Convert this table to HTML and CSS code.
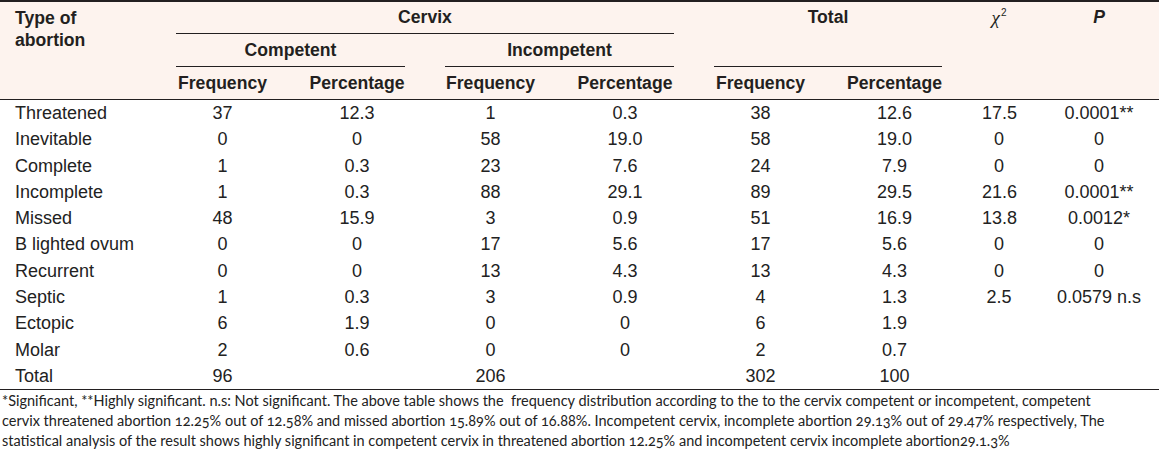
FILE: index.html
```html
<!DOCTYPE html>
<html lang="en">
<head>
<meta charset="utf-8">
<title>Type of abortion by cervix</title>
<link rel="stylesheet" href="styles.css">
</head>
<body>
<div class="tbl">
  <div class="thead grid">
    <div class="h-type">Type of<br>abortion</div>
    <div class="h cervix">Cervix</div>
    <div class="h total">Total</div>
    <div class="h chi"><span><i>χ</i><sup>2</sup></span></div>
    <div class="h p"><i>P</i></div>
    <div class="h comp">Competent</div>
    <div class="h incomp">Incompetent</div>
    <div class="h r3 c2">Frequency</div>
    <div class="h r3 c3">Percentage</div>
    <div class="h r3 c4">Frequency</div>
    <div class="h r3 c5">Percentage</div>
    <div class="h r3 c6">Frequency</div>
    <div class="h r3 c7">Percentage</div>
  </div>
  <div class="tbody grid">
    <div class="name">Threatened</div><div>37</div><div>12.3</div><div>1</div><div>0.3</div><div>38</div><div>12.6</div><div>17.5</div><div>0.0001**</div>
    <div class="name">Inevitable</div><div>0</div><div>0</div><div>58</div><div>19.0</div><div>58</div><div>19.0</div><div>0</div><div>0</div>
    <div class="name">Complete</div><div>1</div><div>0.3</div><div>23</div><div>7.6</div><div>24</div><div>7.9</div><div>0</div><div>0</div>
    <div class="name">Incomplete</div><div>1</div><div>0.3</div><div>88</div><div>29.1</div><div>89</div><div>29.5</div><div>21.6</div><div>0.0001**</div>
    <div class="name">Missed</div><div>48</div><div>15.9</div><div>3</div><div>0.9</div><div>51</div><div>16.9</div><div>13.8</div><div>0.0012*</div>
    <div class="name">B lighted ovum</div><div>0</div><div>0</div><div>17</div><div>5.6</div><div>17</div><div>5.6</div><div>0</div><div>0</div>
    <div class="name">Recurrent</div><div>0</div><div>0</div><div>13</div><div>4.3</div><div>13</div><div>4.3</div><div>0</div><div>0</div>
    <div class="name">Septic</div><div>1</div><div>0.3</div><div>3</div><div>0.9</div><div>4</div><div>1.3</div><div>2.5</div><div>0.0579 n.s</div>
    <div class="name">Ectopic</div><div>6</div><div>1.9</div><div>0</div><div>0</div><div>6</div><div>1.9</div><div></div><div></div>
    <div class="name">Molar</div><div>2</div><div>0.6</div><div>0</div><div>0</div><div>2</div><div>0.7</div><div></div><div></div>
    <div class="name">Total</div><div>96</div><div></div><div>206</div><div></div><div>302</div><div>100</div><div></div><div></div>
  </div>
</div>
<p class="note">*Significant, **Highly significant. n.s: Not significant. The above table shows the&nbsp; frequency distribution according to the to the cervix competent or incompetent, competent cervix threatened abortion 12.25% out of 12.58% and missed abortion 15.89% out of 16.88%. Incompetent cervix, incomplete abortion 29.13% out of 29.47% respectively, The statistical analysis of the result shows highly significant in competent cervix in threatened abortion 12.25% and incompetent cervix incomplete abortion29.1.3%</p>
</body>
</html>
```
FILE: styles.css
```css
html, body {
  margin: 0;
  padding: 0;
  background: #ffffff;
}

body {
  width: 1159px;
  height: 453px;
  overflow: hidden;
  font-family: "Liberation Sans", Arial, sans-serif;
  color: #231f20;
}

.tbl {
  width: 1159px;
  border-top: 2px solid #231f20;
  border-bottom: 1px solid #231f20;
}

.grid {
  display: grid;
  grid-template-columns: 136px 93px 96px 91px 98px 93px 95px 34px 86px;
  column-gap: 40px;
}

.thead {
  background: #fdf3ee;
  border-bottom: 1px solid #231f20;
  grid-template-rows: 32px 33px 32px;
  font-weight: bold;
  font-size: 17.6px;
}

.h {
  display: flex;
  align-items: center;
  justify-content: center;
  white-space: nowrap;
  box-sizing: border-box;
}

.h-type {
  grid-column: 1;
  grid-row: 1 / 4;
  padding: 5px 0 0 15px;
  line-height: 22px;
}

.cervix {
  grid-column: 2 / 6;
  grid-row: 1;
  border-bottom: 1px solid #231f20;
}

.total {
  grid-column: 6 / 8;
  grid-row: 1 / 3;
  align-items: flex-start;
  line-height: 31px;
  border-bottom: 1px solid #231f20;
}

.chi, .p {
  grid-row: 1;
  align-items: flex-start;
  line-height: 31px;
}

.chi {
  grid-column: 8;
  font-weight: normal;
  font-family: "Liberation Serif", "Times New Roman", serif;
  font-size: 19px;
}

.chi sup {
  font-family: "Liberation Sans", Arial, sans-serif;
  font-size: 10px;
  line-height: 0;
  vertical-align: 8px;
  margin-left: 1px;
}

.p {
  grid-column: 9;
}

.comp {
  grid-column: 2 / 4;
  grid-row: 2;
  border-bottom: 1px solid #231f20;
}

.incomp {
  grid-column: 4 / 6;
  grid-row: 2;
  border-bottom: 1px solid #231f20;
}

.r3 { grid-row: 3; }
.c2 { grid-column: 2; }
.c3 { grid-column: 3; }
.c4 { grid-column: 4; }
.c5 { grid-column: 5; }
.c6 { grid-column: 6; }
.c7 { grid-column: 7; }

.tbody {
  grid-auto-rows: 26.3px;
  font-size: 18px;
  color: #222222;
}

.tbody > div {
  line-height: 26.3px;
  text-align: center;
  white-space: nowrap;
}

.tbody > .name {
  text-align: left;
  padding-left: 15px;
}

.note {
  margin: 1px 0 0 2px;
  width: 1125px;
  font-family: Lato, "Open Sans", sans-serif;
  font-size: 14.5px;
  line-height: 20px;
  color: #222222;
  font-variant-numeric: oldstyle-nums;
}
```
